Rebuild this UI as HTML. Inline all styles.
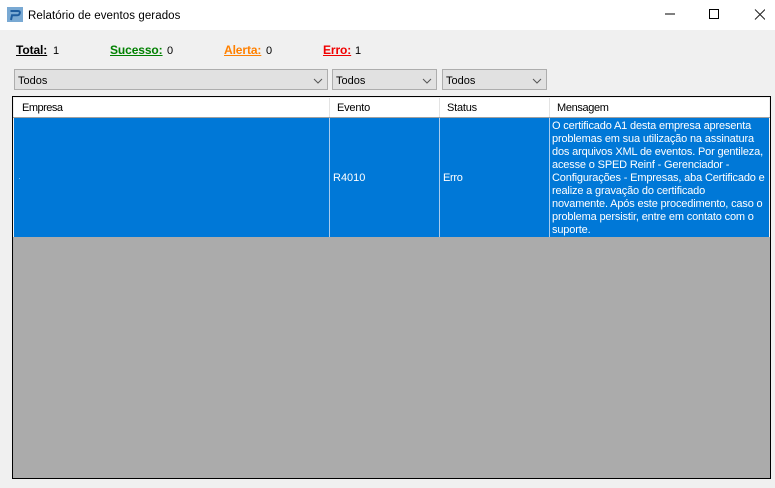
<!DOCTYPE html>
<html lang="pt">
<head>
<meta charset="utf-8">
<title>Relatório de eventos gerados</title>
<style>
html,body{margin:0;padding:0}
body{position:relative;width:775px;height:488px;overflow:hidden;background:#f0f0f0;font:11px/13px "Liberation Sans",sans-serif;color:#000}
.a{position:absolute;white-space:nowrap}
#title{left:0;top:0;width:775px;height:30px;background:#fff}
.l{font-weight:bold;font-size:12px;text-decoration:underline;top:44px;letter-spacing:-.1px}
.n{top:45px}
.c{height:19px;top:69px;background:#e1e1e1;border:1px solid #adadad;box-sizing:content-box}
.c span{position:absolute;left:3px;top:5px}
.c svg{position:absolute;right:4px;top:8px}
#grid{left:12px;top:96px;width:757px;height:381px;border:1px solid #000;background:#ababab;overflow:hidden}
#head{position:absolute;left:0;top:0;width:757px;height:20px;background:#f0f0f0}
#hw{position:absolute;left:1px;top:1px;width:755px;height:19px;background:#fff}
#hb{position:absolute;left:0;top:20px;width:757px;height:1px;background:#a0a0a0}
#row{position:absolute;left:0;top:21px;width:757px;height:119px;background:#f0f0f0;color:#fff}
#rb{position:absolute;left:1px;top:0;width:755px;height:119px;background:#0078d7}
.hs{position:absolute;top:1px;width:1px;height:20px;background:#e3e3e3}
.rs{position:absolute;top:0;width:1px;height:119px;background:#a6cbee}
.h{top:5px;letter-spacing:-.2px}
</style>
</head>
<body>
<div class="a" id="title"></div>
<svg class="a" style="left:7px;top:7px" width="16" height="15" viewBox="0 0 16 15">
<rect x="0" y="0" width="16" height="15" fill="#79a9d3"/>
<path d="M3.5 4 H11 Q13.2 4 12.8 6 Q12.4 8.3 10.2 8.3 H5 L4 13" fill="none" stroke="#1d5c9e" stroke-width="2"/>
</svg>
<div class="a" style="left:28px;top:10px;font-size:11.5px;letter-spacing:.08px">Relatório de eventos gerados</div>
<svg class="a" style="left:665px;top:9px" width="100" height="12" viewBox="0 0 100 12">
<path d="M0 5H10" stroke="#000" stroke-width="1" fill="none"/>
<rect x="44.5" y="0.5" width="9" height="9" stroke="#000" fill="none"/>
<path d="M90 0.5L100 10.5M100 0.5L90 10.5" stroke="#222" stroke-width="1" fill="none"/>
</svg>

<div class="a l" style="left:16px;color:#000">Total:</div>
<div class="a n" style="left:53px">1</div>
<div class="a l" style="left:110px;color:#008000">Sucesso:</div>
<div class="a n" style="left:167px">0</div>
<div class="a l" style="left:224px;color:#ff8000">Alerta:</div>
<div class="a n" style="left:266px">0</div>
<div class="a l" style="left:323px;color:#f00000">Erro:</div>
<div class="a n" style="left:355px">1</div>

<div class="a c" style="left:14px;width:312px"><span>Todos</span><svg width="10" height="6" viewBox="0 0 10 6"><path d="M1 1L5 5L9 1" fill="none" stroke="#555" stroke-width="1"/></svg></div>
<div class="a c" style="left:332px;width:103px"><span>Todos</span><svg width="10" height="6" viewBox="0 0 10 6"><path d="M1 1L5 5L9 1" fill="none" stroke="#555" stroke-width="1"/></svg></div>
<div class="a c" style="left:442px;width:103px"><span>Todos</span><svg width="10" height="6" viewBox="0 0 10 6"><path d="M1 1L5 5L9 1" fill="none" stroke="#555" stroke-width="1"/></svg></div>

<div class="a" id="grid">
<div id="head"><div id="hw"></div></div>
<div class="a h" style="left:9px;letter-spacing:-.5px">Empresa</div>
<div class="a h" style="left:324px">Evento</div>
<div class="a h" style="left:434px">Status</div>
<div class="a h" style="left:544px;letter-spacing:-.35px">Mensagem</div>
<div class="hs" style="left:316px"></div>
<div class="hs" style="left:426px"></div>
<div class="hs" style="left:536px"></div>
<div id="hb"></div>
<div id="row">
<div id="rb"></div>
<div class="a" style="left:6px;top:60px;width:1px;height:1px;background:#6fb0e6"></div>
<div class="rs" style="left:316px"></div>
<div class="rs" style="left:426px"></div>
<div class="rs" style="left:536px"></div>
<div class="a" style="left:320px;top:54px">R4010</div>
<div class="a" style="left:430px;top:54px;letter-spacing:-.3px">Erro</div>
<div class="a" style="left:539px;top:2px;letter-spacing:-.16px">O certificado A1 desta empresa apresenta<br>problemas em sua utilização na assinatura<br>dos arquivos XML de eventos. Por gentileza,<br>acesse o SPED Reinf - Gerenciador -<br>Configurações - Empresas, aba Certificado e<br>realize a gravação do certificado<br>novamente. Após este procedimento, caso o<br>problema persistir, entre em contato com o<br>suporte.</div>
</div>
</div>
</body>
</html>
